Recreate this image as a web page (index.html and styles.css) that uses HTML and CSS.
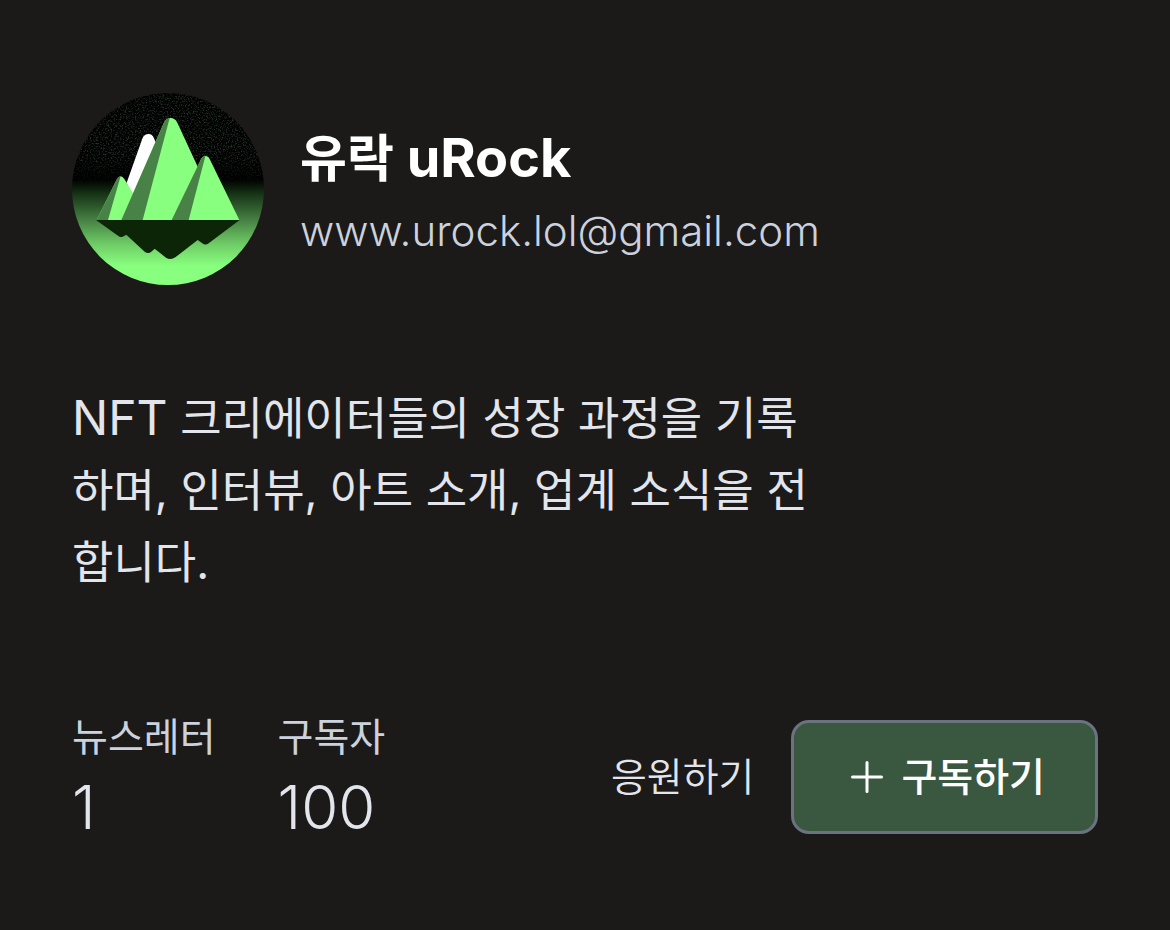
FILE: index.html
```html
<!DOCTYPE html>
<html lang="ko">
<head>
<meta charset="utf-8">
<meta name="viewport" content="width=device-width, initial-scale=1">
<title>유락 uRock</title>
<link rel="stylesheet" href="styles.css">
</head>
<body>
<main class="card">
  <header class="profile">
    <svg class="avatar" viewBox="24 27 576 576" role="img" aria-label="유락 uRock">
      <defs>
        <linearGradient id="sky" x1="0" y1="0" x2="0" y2="1">
          <stop offset="0" stop-color="#000"/>
          <stop offset=".45" stop-color="#000"/>
          <stop offset=".52" stop-color="#143014"/>
          <stop offset=".66" stop-color="#468043"/>
          <stop offset=".79" stop-color="#6fcd66"/>
          <stop offset=".9" stop-color="#88ff7e"/>
          <stop offset="1" stop-color="#88ff7e"/>
        </linearGradient>
        <linearGradient id="fade" x1="0" y1="0" x2="0" y2="1">
          <stop offset=".65" stop-color="#fff"/>
          <stop offset="1" stop-color="#000"/>
        </linearGradient>
        <filter id="stars" x="0" y="0" width="1" height="1" color-interpolation-filters="sRGB">
          <feTurbulence type="fractalNoise" baseFrequency=".22" numOctaves="2" seed="7"/>
          <feColorMatrix values="0 0 0 0 .24  0 0 0 0 .34  0 0 0 0 .27  2 0 0 0 -.95"/>
        </filter>
        <mask id="upper"><rect x="24" y="27" width="576" height="280" fill="url(#fade)"/></mask>
        <clipPath id="disc"><circle cx="312" cy="315" r="288"/></clipPath>
      </defs>
      <g clip-path="url(#disc)">
        <rect x="24" y="27" width="576" height="576" fill="url(#sky)"/>
        <g mask="url(#upper)"><rect x="24" y="27" width="576" height="280" filter="url(#stars)"/></g>
      </g>
      <path fill="#fff" d="M188 296L235 164Q240 150 254 150Q265 150 270 163L276 178L230 340H206Z"/>
      <path fill="#88ff7e" d="M98 408L159 285Q170 269 181 285L206 326L226 408Z"/>
      <path fill="#498247" d="M98 408L159 285Q163 277 170 276L132 408Z"/>
      <path fill="#88ff7e" d="M172 408L299 118Q306 102 320 102Q333 102 340 116L400 246L420 408Z"/>
      <path fill="#498247" d="M172 408L299 118Q305 104 317 102L236 408Z"/>
      <path fill="#88ff7e" d="M323 408L410 228Q415 216 425 216Q433 216 438 227L526 408Z"/>
      <path fill="#498247" d="M323 408L410 228Q415 217 424 217L374 408Z"/>
      <path fill="#0c2507" d="M96 408H527L434 478Q424 486 414 477L401 468L334 520Q320 530 306 521L272 494L262 503Q253 511 242 503L187 452L176 458Q169 461 162 455Z"/>
    </svg>
    <div class="identity">
      <h1 class="name"><span class="name-ko">유락</span> uRock</h1>
      <p class="email">www.urock.lol@gmail.com</p>
    </div>
  </header>

  <p class="description"><span class="latin">NFT</span> 크리에이터들의 성장 과정을 기록하며, 인터뷰, 아트 소개, 업계 소식을 전합니다.</p>

  <footer class="footer">
    <dl class="stats">
      <div class="stat"><dt>뉴스레터</dt><dd>1</dd></div>
      <div class="stat"><dt>구독자</dt><dd>100</dd></div>
    </dl>
    <div class="actions">
      <button type="button" class="cheer">응원하기</button>
      <button type="button" class="subscribe">
        <svg class="plus" viewBox="0 0 32 32" aria-hidden="true"><path d="M16 1.5V30.5M1.5 16H30.5"/></svg>
        구독하기
      </button>
    </div>
  </footer>
</main>
</body>
</html>
```
FILE: styles.css
```css
* {
  box-sizing: border-box;
}

body {
  margin: 0;
  background: #1c1a19;
  color: #e2e5ec;
  font-family: Inter, "Noto Sans CJK KR", sans-serif;
}

h1, p, dl, dd {
  margin: 0;
}

.card {
  display: flex;
  flex-direction: column;
  padding: 93px 72px 83px;
}

.profile {
  display: flex;
  align-items: center;
  gap: 36px;
}

.avatar {
  flex: none;
  width: 192px;
  height: 192px;
}

.identity {
  padding-top: 10px;
}

.name {
  color: #fff;
  font-size: 54px;
  font-weight: 700;
  line-height: 72px;
}

.name-ko {
  font-size: 51px;
}

.email {
  color: #cbd2de;
  font-size: 42px;
  font-weight: 350;
  line-height: 72px;
}

.description {
  max-width: 756px;
  margin-top: 97px;
  font-size: 45px;
  font-weight: 400;
  line-height: 72px;
}

.latin {
  font-size: 48px;
}

.footer {
  display: flex;
  justify-content: space-between;
  align-items: center;
  margin-top: 108px;
}

.stats {
  display: flex;
  gap: 62px;
}

.stat dt {
  color: #cbd2de;
  font-size: 39px;
  font-weight: 400;
  line-height: 60px;
}

.stat dd {
  font-size: 60px;
  font-weight: 300;
  line-height: 80px;
}

.actions {
  display: flex;
  align-items: center;
  gap: 37px;
}

.cheer,
.subscribe {
  font-family: inherit;
  font-size: 39px;
  line-height: 60px;
  cursor: pointer;
}

.cheer {
  padding: 0;
  border: 0;
  background: none;
  color: #e2e5ec;
  font-weight: 350;
}

.subscribe {
  display: flex;
  align-items: center;
  gap: 18px;
  padding: 24px 50px 24px 57px;
  border: 3px solid #6b7280;
  border-radius: 18px;
  background: #3a573f;
  color: #fff;
  font-weight: 500;
}

.plus {
  width: 32px;
  height: 32px;
  fill: none;
  stroke: #fff;
  stroke-width: 3;
  stroke-linecap: round;
}
```
